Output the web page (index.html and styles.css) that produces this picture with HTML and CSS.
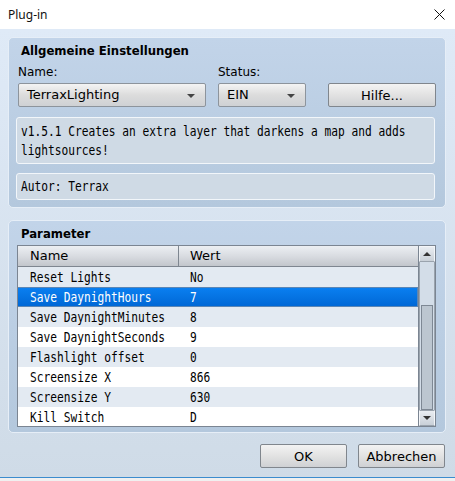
FILE: index.html
```html
<!DOCTYPE html>
<html lang="de">
<head>
    <meta charset="UTF-8">
    <title>Plug-in</title>
    <link rel="stylesheet" href="styles.css">
</head>
<body>

<div class="titlebar">
    <span class="title">Plug-in</span>
    <svg class="close" width="11" height="11" viewBox="0 0 11 11">
        <path d="M0.5 0.5 L10.5 10.5 M10.5 0.5 L0.5 10.5" stroke="#111" stroke-width="1" fill="none"/>
    </svg>
</div>

<div class="dialog">
    <section class="group general">
        <h2>Allgemeine Einstellungen</h2>
        <div class="fields">
            <div class="field name-field">
                <label>Name:</label>
                <div class="combo">TerraxLighting<span class="arrow"></span></div>
            </div>
            <div class="field status-field">
                <label>Status:</label>
                <div class="combo">EIN<span class="arrow"></span></div>
            </div>
            <button class="btn help">Hilfe...</button>
        </div>
        <div class="textbox desc"><div class="mono-block">v1.5.1 Creates an extra layer that darkens a map and adds lightsources!</div></div>
        <div class="textbox author"><span class="mono">Autor: Terrax</span></div>
    </section>

    <section class="group params">
        <h2>Parameter</h2>
        <div class="table">
            <div class="grid">
                <div class="row head">
                    <span class="col-name">Name</span>
                    <span class="col-value">Wert</span>
                </div>
                <div id="rows"></div>
            </div>
            <div class="scrollbar">
                <div class="sb-btn up"><span></span></div>
                <div class="sb-track"><div class="sb-thumb"></div></div>
                <div class="sb-btn down"><span></span></div>
            </div>
        </div>
    </section>

    <div class="actions">
        <button class="btn">OK</button>
        <button class="btn">Abbrechen</button>
    </div>
</div>
<div class="footer"></div>

<script>
    const parameter = [
        { name: "Reset Lights", wert: "No" },
        { name: "Save DaynightHours", wert: "7", selected: true },
        { name: "Save DaynightMinutes", wert: "8" },
        { name: "Save DaynightSeconds", wert: "9" },
        { name: "Flashlight offset", wert: "0" },
        { name: "Screensize X", wert: "866" },
        { name: "Screensize Y", wert: "630" },
        { name: "Kill Switch", wert: "D" }
    ];

    const container = document.getElementById("rows");
    parameter.forEach((p) => {
        const row = document.createElement("div");
        row.classList.add("row");
        if (p.selected) row.classList.add("selected");

        const name = document.createElement("span");
        name.classList.add("col-name");
        const nameText = document.createElement("span");
        nameText.classList.add("mono");
        nameText.textContent = p.name;
        name.appendChild(nameText);

        const wert = document.createElement("span");
        wert.classList.add("col-value");
        const wertText = document.createElement("span");
        wertText.classList.add("mono");
        wertText.textContent = p.wert;
        wert.appendChild(wertText);

        row.appendChild(name);
        row.appendChild(wert);
        container.appendChild(row);
    });
</script>
</body>
</html>
```

FILE: styles.css
```css
body {
    margin: 0;
    width: 455px;
    height: 481px;
    overflow: hidden;
    font-family: 'DejaVu Sans Condensed', 'DejaVu Sans', sans-serif;
    font-size: 12px;
    color: #000;
    background: #f0f0f0;
}

.titlebar {
    height: 29px;
    background: #fff;
    display: flex;
    align-items: center;
    justify-content: space-between;
    padding: 0 10px 0 8px;
}

.title {
    font-family: 'Noto Sans', sans-serif;
    font-size: 12px;
    color: #111;
    margin-top: -1px;
}

.close {
    margin-top: -1px;
}

.dialog {
    height: 448px;
    box-sizing: border-box;
    padding: 8px 9px 0 8px;
    background: linear-gradient(to bottom, #dfeaf7, #cfdbe7);
}

.footer {
    height: 1px;
    background: #3b8cce;
}

.group {
    border: 1px solid #e6eef7;
    border-radius: 5px;
    background: linear-gradient(to bottom, #c2d4e9, #b4c8dd);
    padding: 0 9px 0 8px;
}

.group h2 {
    margin: 0;
    padding: 5px 0 0 4px;
    font-size: 13px;
    line-height: 16px;
    font-weight: bold;
}

.general {
    height: 171px;
    box-sizing: border-box;
}

.params {
    height: 213px;
    box-sizing: border-box;
    margin-top: 12px;
}

.fields {
    display: flex;
    align-items: flex-end;
    margin-top: 6px;
}

.field label {
    display: block;
    font-family: 'DejaVu Sans', sans-serif;
    line-height: 15px;
    margin: 0 0 3px 0;
}

.name-field {
    margin-left: 1px;
}

.name-field .combo {
    width: 188px;
}

.status-field {
    margin-left: 12px;
}

.status-field .combo {
    width: 88px;
}

.combo {
    position: relative;
    height: 24px;
    box-sizing: border-box;
    border: 1px solid #8d949c;
    border-radius: 2px;
    background: linear-gradient(to bottom, #f4f4f4, #dcdcdc 50%, #cfd1d4);
    padding-left: 8px;
    font-family: 'DejaVu Sans', sans-serif;
    line-height: 22px;
    font-size: 13px;
}

.arrow {
    position: absolute;
    right: 10px;
    top: 10px;
    border-left: 4px solid transparent;
    border-right: 4px solid transparent;
    border-top: 4px solid #444;
}

.btn {
    font-family: 'DejaVu Sans', sans-serif;
    font-size: 13px;
    color: #000;
    height: 24px;
    box-sizing: border-box;
    border: 1px solid #80868d;
    border-radius: 2px;
    background: linear-gradient(to bottom, #f3f3f3, #e2e2e2 50%, #cfd1d4);
    padding: 0;
}

.help {
    width: 108px;
    margin-left: 22px;
}

/* Schmale, hohe Monospace-Schrift wie im Editor */
.mono,
.mono-block {
    font-family: 'DejaVu Sans Mono', monospace;
    font-size: 13.5px;
    transform: scaleX(0.83);
    transform-origin: left center;
}

.mono {
    display: inline-block;
    white-space: nowrap;
}

.mono-block {
    width: 120%;
    transform-origin: left top;
}

.textbox {
    margin-left: -1px;
    margin-right: 1px;
    box-sizing: border-box;
    border: 1px solid #f2f6fa;
    border-radius: 3px;
    background: #cfdae5;
    padding: 0 0 0 4px;
    overflow: hidden;
}

.desc {
    margin-top: 10px;
    height: 47px;
    line-height: 19px;
    padding-top: 4px;
}

.author {
    margin-top: 9px;
    height: 27px;
    line-height: 25px;
}

.params h2 {
    padding-bottom: 3px;
}

.table {
    display: flex;
    height: 182px;
    box-sizing: border-box;
    border: 1px solid #7b8592;
    background: #fff;
}

.grid {
    flex: 1;
    overflow: hidden;
}

.row {
    display: flex;
    height: 20px;
    line-height: 20px;
    box-sizing: border-box;
    white-space: nowrap;
}

.row:nth-child(odd) {
    background: #e3eaf2;
}

.row.head {
    height: 21px;
    background: linear-gradient(to bottom, #eceff3, #d9dce1 50%, #c2c6cc);
    border-bottom: 1px solid #7e8690;
    font-family: 'DejaVu Sans', sans-serif;
    font-size: 13px;
    line-height: 20px;
}

.col-name {
    flex: none;
    width: 161px;
    box-sizing: border-box;
    padding-left: 12px;
}

.head .col-name {
    border-right: 1px solid #7e8690;
}

.col-value {
    padding-left: 11px;
}

.head .col-value {
    padding-left: 11px;
}

.row.selected {
    background: linear-gradient(to bottom, #0a7ff0, #0068d6);
    border: 1px solid #5b86b5;
    border-left: 0;
    color: #fff;
    line-height: 18px;
}

.scrollbar {
    width: 16px;
    display: flex;
    flex-direction: column;
    border-left: 1px solid #7b8592;
    background: #d3dde8;
}

.sb-btn {
    height: 16px;
    box-sizing: border-box;
    border: 1px solid #f4f6f9;
    border-bottom-color: #9aa3ad;
    background: linear-gradient(to bottom, #e9edf2, #c9d0d8);
    position: relative;
}

.sb-btn.down {
    border-top-color: #9aa3ad;
}

.sb-btn span {
    position: absolute;
    left: 3px;
    top: 5px;
    border-left: 4px solid transparent;
    border-right: 4px solid transparent;
}

.up span {
    border-bottom: 4px solid #333;
}

.down span {
    border-top: 4px solid #333;
}

.sb-track {
    flex: 1;
    position: relative;
    border-left: 1px solid #9aa3ad;
    border-right: 1px solid #9aa3ad;
}

.sb-thumb {
    position: absolute;
    left: 1px;
    right: 1px;
    top: 43px;
    bottom: 0;
    background: #bcc6d0;
    border: 1px solid #7e8894;
}

.actions {
    display: flex;
    justify-content: flex-end;
    gap: 11px;
    margin-top: 11px;
    padding-right: 1px;
}

.actions .btn {
    width: 87px;
}
```
